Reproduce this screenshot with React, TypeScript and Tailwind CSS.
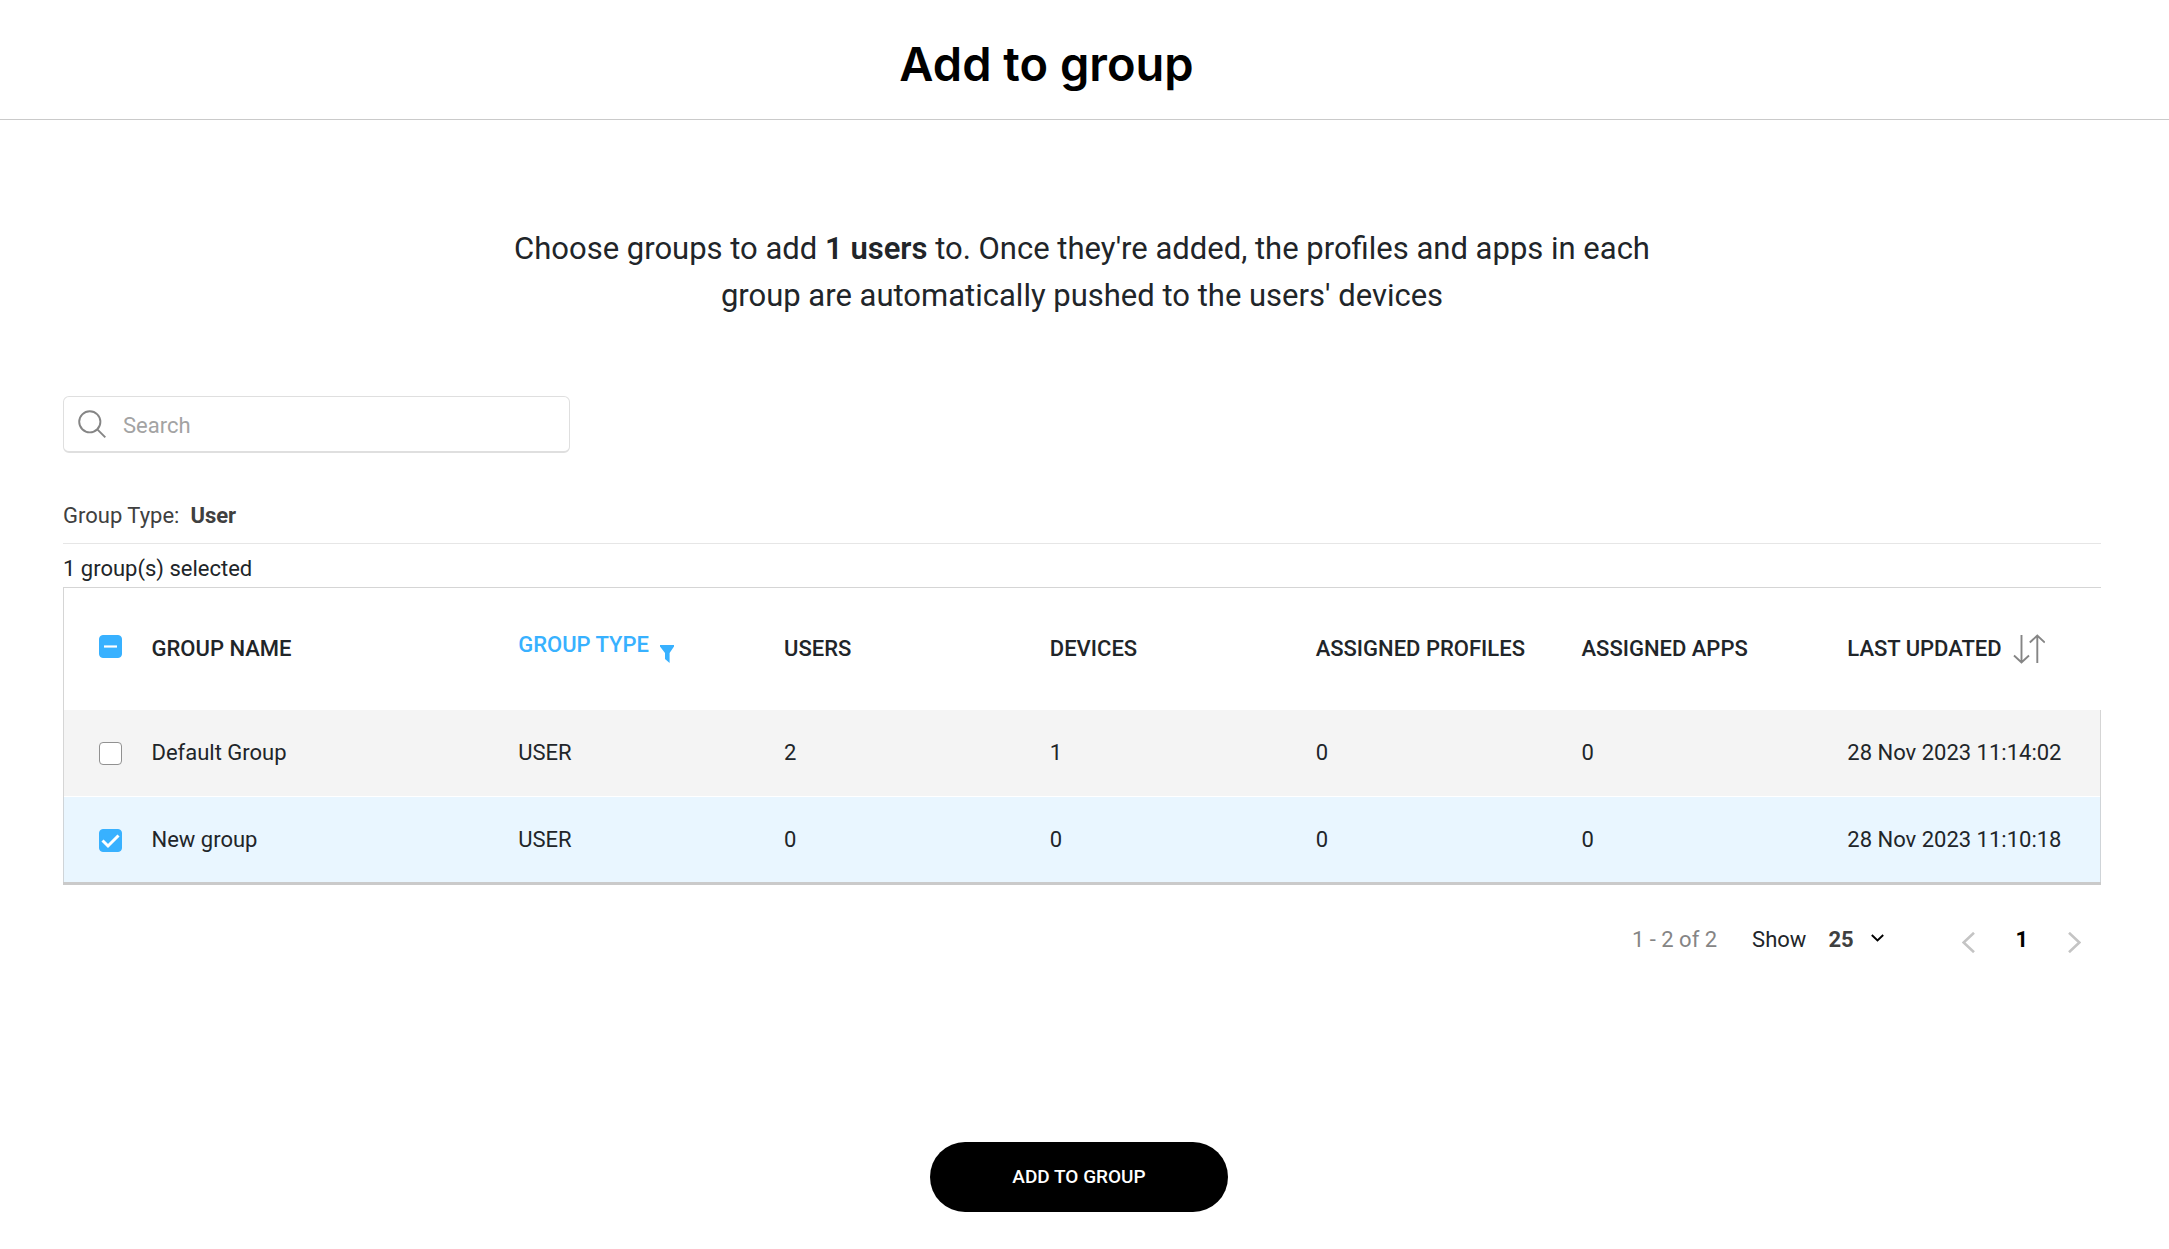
import { useEffect, useRef, useState } from "react";

type Group = {
  name: string;
  type: string;
  users: number;
  devices: number;
  profiles: number;
  apps: number;
  updated: string;
};

const groups: Group[] = [
  { name: "Default Group", type: "USER", users: 2, devices: 1, profiles: 0, apps: 0, updated: "28 Nov 2023 11:14:02" },
  { name: "New group", type: "USER", users: 0, devices: 0, profiles: 0, apps: 0, updated: "28 Nov 2023 11:10:18" },
];

type CheckProps = {
  label: string;
  checked: boolean;
  indeterminate?: boolean;
  onChange: (checked: boolean) => void;
};

function Check({ label, checked, indeterminate = false, onChange }: CheckProps) {
  const ref = useRef<HTMLInputElement>(null);
  useEffect(() => {
    if (ref.current) ref.current.indeterminate = indeterminate;
  }, [indeterminate]);
  return (
    <span className="relative block size-[23px]">
      <input
        ref={ref}
        type="checkbox"
        aria-label={label}
        checked={checked}
        onChange={(e) => onChange(e.target.checked)}
        className="block size-full appearance-none rounded-[4px] border border-[#919191] bg-white checked:border-[#38b1ff] checked:bg-[#38b1ff] indeterminate:border-[#38b1ff] indeterminate:bg-[#38b1ff]"
      />
      {indeterminate && (
        <svg viewBox="0 0 23 23" className="pointer-events-none absolute inset-0 size-full" aria-hidden="true">
          <path d="M5 11.5h13" stroke="#fff" strokeWidth="2.2" />
        </svg>
      )}
      {checked && !indeterminate && (
        <svg viewBox="0 0 23 23" className="pointer-events-none absolute inset-0 size-full" aria-hidden="true">
          <path d="M3.5 11.5l5.5 5.5L19.5 6.5" fill="none" stroke="#fff" strokeWidth="3" />
        </svg>
      )}
    </span>
  );
}

export default function App() {
  const [selected, setSelected] = useState<string[]>(["New group"]);
  const [query, setQuery] = useState("");
  const all = selected.length === groups.length;

  return (
    <div className="bg-white font-['Roboto',sans-serif] text-[22px] leading-7 text-[#212529]">
      <header className="flex h-[120px] items-center justify-center border-b border-[#cacaca] pt-2 pr-[76px]">
        <h1 className="font-['Inter',sans-serif] text-[47px] leading-[54px] font-semibold text-black">Add to group</h1>
      </header>

      <main className="flex flex-col pr-[68px] pl-[63px]">
        <p className="mx-auto mt-[105px] max-w-[1160px] text-center text-[31px] leading-[47px] font-normal">
          Choose groups to add <strong className="font-semibold">1 users</strong> to. Once they're added, the profiles and apps in
          each group are automatically pushed to the users' devices
        </p>

        <label className="mt-[77px] flex h-[57px] w-[507px] max-w-full items-center gap-[17px] rounded-md border border-b-2 border-[#dfdfdf] pr-3 pl-[14px]">
          <svg viewBox="0 0 28 28" className="size-7 shrink-0" fill="none" stroke="#858585" strokeWidth="1.9" aria-hidden="true">
            <circle cx="11.8" cy="11.8" r="10.6" />
            <path d="M19.3 19.3l8 8" />
          </svg>
          <input
            type="text"
            aria-label="Search"
            placeholder="Search"
            value={query}
            onChange={(e) => setQuery(e.target.value)}
            className="min-w-0 flex-1 pt-1 outline-none placeholder:text-[#a3a3a3]"
          />
        </label>

        <div className="mt-[49px] flex gap-[11px] border-b border-[#e6e6e6] pb-[13px] text-[#404040]">
          <span>Group Type:</span>
          <strong className="font-bold">User</strong>
        </div>
        <p className="mt-[11px]">{selected.length} group(s) selected</p>

        <table className="mt-1 w-full table-fixed border-collapse text-left">
          <colgroup>
            <col className="w-[88px]" />
            <col className="w-[18%]" />
            <col className="w-[13.05%]" />
            <col className="w-[13.05%]" />
            <col className="w-[13.05%]" />
            <col className="w-[13.05%]" />
            <col className="w-[13.05%]" />
            <col />
          </colgroup>
          <thead>
            <tr className="h-[122px] border-t border-l border-[#d5d5d5] whitespace-nowrap">
              <th className="pb-[5px] pl-[35px] align-middle">
                <Check
                  label="Select all groups"
                  checked={all}
                  indeterminate={selected.length > 0 && !all}
                  onChange={(on) => setSelected(on ? groups.map((g) => g.name) : [])}
                />
              </th>
              <th className="font-medium">GROUP NAME</th>
              <th className="font-medium">
                <button type="button" className="flex items-start gap-[11px] pb-1 text-[#38b1ff]">
                  GROUP TYPE
                  <svg viewBox="0 0 14 18" className="mt-[14px] h-[18px] w-[14px]" fill="#38b1ff" aria-hidden="true">
                    <path d="M0 0h14v1.6L9.6 8v10L5 14V8L0 1.6z" />
                  </svg>
                </button>
              </th>
              <th className="font-medium">USERS</th>
              <th className="font-medium">DEVICES</th>
              <th className="font-medium">ASSIGNED PROFILES</th>
              <th className="font-medium">ASSIGNED APPS</th>
              <th className="font-medium">
                <button type="button" className="flex items-center gap-[11px]">
                  LAST UPDATED
                  <svg viewBox="0 0 32 30" className="h-[30px] w-8" fill="none" stroke="#858585" strokeWidth="1.9" aria-hidden="true">
                    <path d="M8.5 1v27.5M1 21.5l7.5 7 7.5-7M24.3 29V1.5M16.8 8.5l7.5-7 7.5 7" />
                  </svg>
                </button>
              </th>
            </tr>
          </thead>
          <tbody className="border-b-[3px] border-b-[#cacaca]">
            {groups.map((g) => {
              const on = selected.includes(g.name);
              return (
                <tr
                  key={g.name}
                  className={
                    on
                      ? "h-[87px] border-x border-x-[#cfd4d8] border-t border-t-white bg-[#e9f6ff] whitespace-nowrap"
                      : "h-[87px] border-x border-x-[#d5d5d5] bg-[#f4f4f4] whitespace-nowrap"
                  }
                >
                  <td className="pt-[2px] pl-[35px]">
                    <Check
                      label={g.name}
                      checked={on}
                      onChange={(v) => setSelected(v ? [...selected, g.name] : selected.filter((n) => n !== g.name))}
                    />
                  </td>
                  <td>{g.name}</td>
                  <td>{g.type}</td>
                  <td>{g.users}</td>
                  <td>{g.devices}</td>
                  <td>{g.profiles}</td>
                  <td>{g.apps}</td>
                  <td>{g.updated}</td>
                </tr>
              );
            })}
          </tbody>
        </table>

        <div className="mt-[41px] flex items-center justify-end pr-5">
          <span className="mr-[35px] text-[#858585]">1 - 2 of 2</span>
          <label htmlFor="page-size">Show</label>
          <span className="relative ml-[22px] flex items-center">
            <select id="page-size" defaultValue="25" className="w-[58px] appearance-none bg-transparent font-bold text-[#404040]">
              <option>25</option>
              <option>50</option>
            </select>
            <svg viewBox="0 0 13 8" className="pointer-events-none absolute top-2 right-[2px] h-2 w-[13px]" fill="none" stroke="#000" strokeWidth="1.9" aria-hidden="true">
              <path d="M.8 1l5.7 5.5L12.2 1" />
            </svg>
          </span>
          <nav aria-label="Pagination" className="ml-[76px] flex items-center">
            <button type="button" aria-label="Previous page" className="pt-1">
              <svg viewBox="0 0 13 21" className="h-[21px] w-[13px]" fill="none" stroke="#c4c4c4" strokeWidth="2.6" aria-hidden="true">
                <path d="M12 .8L1.6 10.5 12 20.2" />
              </svg>
            </button>
            <button type="button" aria-current="page" className="mx-10 font-bold text-black">
              1
            </button>
            <button type="button" aria-label="Next page" className="pt-1">
              <svg viewBox="0 0 13 21" className="h-[21px] w-[13px]" fill="none" stroke="#c4c4c4" strokeWidth="2.6" aria-hidden="true">
                <path d="M1 .8l10.4 9.7L1 20.2" />
              </svg>
            </button>
          </nav>
        </div>

        <div className="mt-[188px] mb-9 flex justify-center pr-[6px]">
          <button type="button" className="h-[70px] w-[298px] rounded-full bg-black text-[19px] font-medium text-white">
            ADD TO GROUP
          </button>
        </div>
      </main>
    </div>
  );
}
